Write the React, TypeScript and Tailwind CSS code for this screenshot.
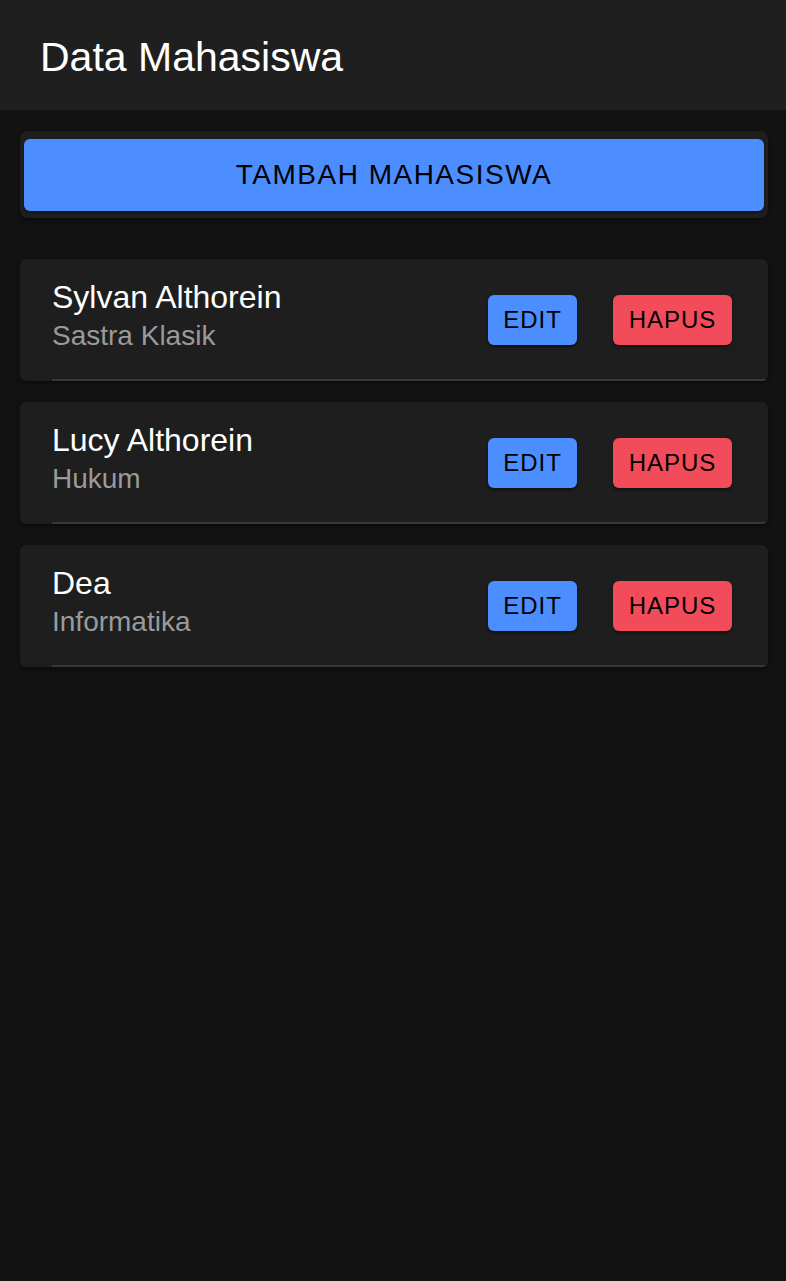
const students = [
  { name: 'Sylvan Althorein', major: 'Sastra Klasik' },
  { name: 'Lucy Althorein', major: 'Hukum' },
  { name: 'Dea', major: 'Informatika' },
]

export default function App() {
  return (
    <div className="min-h-[1281px] bg-[#121212] text-white" style={{ fontFamily: '"Liberation Sans", Arial, sans-serif' }}>
      {/* Toolbar */}
      <header className="h-[110px] bg-[#1f1f1f] flex items-center px-[40px] pt-[4px]">
        <h1 className="text-[41px] leading-[46px] font-normal">Data Mahasiswa</h1>
      </header>

      <main className="pl-[20px] pr-[18px] pt-[21px]">
        {/* Add button */}
        <div className="bg-[#1e1e1e] rounded-[8px] px-[4px] pt-[8px] pb-[7px] shadow-[0_2px_4px_rgba(0,0,0,0.4)]">
          <button className="w-full h-[72px] rounded-[6px] bg-[#4c8dff] text-black text-[28px] tracking-[1.5px] flex items-center justify-center shadow-[0_2px_2px_rgba(0,0,0,0.3)]">
            TAMBAH MAHASISWA
          </button>
        </div>

        {/* Student list */}
        <div className="mt-[41px] flex flex-col gap-[21px]">
          {students.map(s => (
            <div
              key={s.name}
              className="h-[122px] bg-[#1e1e1e] rounded-[6px] pl-[32px] flex overflow-hidden shadow-[0_2px_4px_rgba(0,0,0,0.4)]"
            >
              <div className="flex-1 flex items-center pr-[36px] pt-[2px] border-b-2 border-[#383838]">
                <div className="flex-1 self-start pt-[17px]">
                  <p className="text-[32px] leading-[38px] text-white">{s.name}</p>
                  <p className="text-[28px] leading-[34px] mt-[3px] text-[#9a9a9a]">{s.major}</p>
                </div>
                <div className="flex items-center gap-[36px]">
                  <button className="h-[50px] w-[89px] rounded-[6px] bg-[#4c8dff] text-black text-[24px] tracking-[1px] flex items-center justify-center shadow-[0_2px_3px_rgba(0,0,0,0.45)]">
                    EDIT
                  </button>
                  <button className="h-[50px] w-[119px] rounded-[6px] bg-[#f24b5a] text-black text-[24px] tracking-[1px] flex items-center justify-center shadow-[0_2px_3px_rgba(0,0,0,0.45)]">
                    HAPUS
                  </button>
                </div>
              </div>
            </div>
          ))}
        </div>
      </main>
    </div>
  )
}
